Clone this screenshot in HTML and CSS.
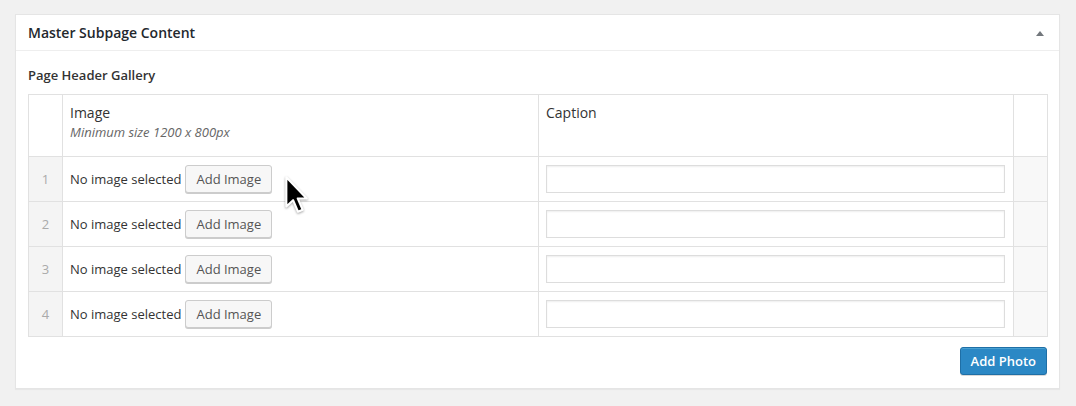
FILE: index.html
```html
<!DOCTYPE html>
<html>
<head>
<meta charset="utf-8">
<link rel="stylesheet" href="styles.css">
</head>
<body>
<div class="postbox">
  <div class="hndle">
    <h2 class="title">Master Subpage Content</h2>
    <span class="toggle"></span>
  </div>
  <div class="inside">
    <div class="field-label">Page Header Gallery</div>
    <table class="repeater">
      <thead>
        <tr>
          <th class="order"></th>
          <th class="col-image">
            <div class="th-label">Image</div>
            <div class="th-desc">Minimum size 1200 x 800px</div>
          </th>
          <th class="col-caption">
            <div class="th-label">Caption</div>
          </th>
          <th class="remove"></th>
        </tr>
      </thead>
      <tbody>
        <tr>
          <td class="order">1</td>
          <td class="col-image"><div class="img-field"><span class="no-img">No image selected</span><button class="btn">Add Image</button></div></td>
          <td class="col-caption"><input class="text-input" type="text"></td>
          <td class="remove"></td>
        </tr>
        <tr>
          <td class="order">2</td>
          <td class="col-image"><div class="img-field"><span class="no-img">No image selected</span><button class="btn">Add Image</button></div></td>
          <td class="col-caption"><input class="text-input" type="text"></td>
          <td class="remove"></td>
        </tr>
        <tr>
          <td class="order">3</td>
          <td class="col-image"><div class="img-field"><span class="no-img">No image selected</span><button class="btn">Add Image</button></div></td>
          <td class="col-caption"><input class="text-input" type="text"></td>
          <td class="remove"></td>
        </tr>
        <tr>
          <td class="order">4</td>
          <td class="col-image"><div class="img-field"><span class="no-img">No image selected</span><button class="btn">Add Image</button></div></td>
          <td class="col-caption"><input class="text-input" type="text"></td>
          <td class="remove"></td>
        </tr>
      </tbody>
    </table>
    <div class="footer">
      <button class="btn-primary">Add Photo</button>
    </div>
  </div>
</div>
<svg class="cursor" width="28" height="42" viewBox="0 0 24 36">
  <path d="M2 2 L2 27 L7.8 21.6 L12 31.5 L16 29.8 L11.8 20.2 L19.5 20.2 Z" fill="#000" stroke="#fff" stroke-width="1.8" stroke-linejoin="round"/>
</svg>
</body>
</html>
```
FILE: styles.css
```css
html, body {
  margin: 0;
  padding: 0;
}
body {
  background: #f1f1f1;
  font-family: "Open Sans", "Liberation Sans", sans-serif;
  font-size: 13px;
  color: #444;
  padding: 14px 16px 0 15px;
  position: relative;
  height: 392px;
  box-sizing: border-box;
}
.postbox {
  width: 1045px;
  box-sizing: border-box;
  background: #fff;
  border: 1px solid #e5e5e5;
  box-shadow: 0 1px 1px rgba(0,0,0,0.04);
}
.hndle {
  position: relative;
  height: 35px;
  border-bottom: 1px solid #eee;
  display: flex;
  align-items: center;
  padding: 0 12px;
}
.title {
  margin: 0;
  font-size: 14px;
  font-weight: 600;
  color: #23282d;
  line-height: 20px;
}
.toggle {
  position: absolute;
  right: 15px;
  top: 16px;
  width: 0;
  height: 0;
  border-left: 4px solid transparent;
  border-right: 4px solid transparent;
  border-bottom: 5px solid #72777c;
}
.inside {
  padding: 15px 12px 13px;
}
.field-label {
  font-size: 13px;
  font-weight: 600;
  color: #333;
  line-height: 18px;
  margin-bottom: 10px;
}
.repeater {
  width: 1019px;
  border-collapse: collapse;
  table-layout: fixed;
  border: 1px solid #e1e1e1;
}
.repeater th, .repeater td {
  border: 1px solid #e1e1e1;
  padding: 8px 8px 8px 7px;
  vertical-align: top;
  text-align: left;
}
.repeater th {
  font-weight: 400;
  padding: 8px 8px 15px 7px;
  height: 38px;
}
.repeater th.order { width: 18px; }
.repeater th.col-image { width: 460px; }
.repeater th.col-caption { width: 459px; }
.repeater th.remove { width: 18px; }
.th-label {
  font-size: 14px;
  line-height: 20px;
  color: #333;
}
.th-desc {
  font-size: 13px;
  font-style: italic;
  color: #666;
  line-height: 18px;
}
.repeater td {
  height: 28px;
  vertical-align: middle;
}
.repeater td.order {
  background: #f4f4f4;
  color: #aaaaaa;
  text-align: center;
  padding: 8px 0;
}
.repeater td.remove {
  background: #f8f8f8;
}
.img-field {
  display: flex;
  align-items: center;
  gap: 4px;
}
.no-img {
  color: #333;
  line-height: 20px;
}
.btn {
  height: 28px;
  padding: 0 10px;
  font-family: inherit;
  font-size: 13px;
  line-height: 26px;
  color: #555;
  background: #f7f7f7;
  border: 1px solid #ccc;
  border-radius: 3px;
  box-shadow: 0 1px 0 #ccc;
  margin: 0;
}
.text-input {
  display: block;
  width: 100%;
  height: 28px;
  box-sizing: border-box;
  border: 1px solid #ddd;
  box-shadow: inset 0 1px 2px rgba(0,0,0,0.07);
  margin: 0;
  padding: 3px 5px;
  font-family: inherit;
  font-size: 13px;
}
.footer {
  display: flex;
  justify-content: flex-end;
  margin-top: 10px;
}
.btn-primary {
  height: 28px;
  padding: 0 10px;
  font-family: inherit;
  font-size: 13px;
  font-weight: 600;
  line-height: 26px;
  color: #fff;
  background: #2b88c5;
  border: 1px solid #1f6fa6;
  border-radius: 3px;
  box-shadow: inset 0 1px 0 rgba(120,200,230,0.4), 0 1px 0 rgba(0,0,0,0.15);
}
.cursor {
  position: absolute;
  left: 284px;
  top: 175px;
  filter: drop-shadow(0 1px 1px rgba(0,0,0,0.35));
}
```
